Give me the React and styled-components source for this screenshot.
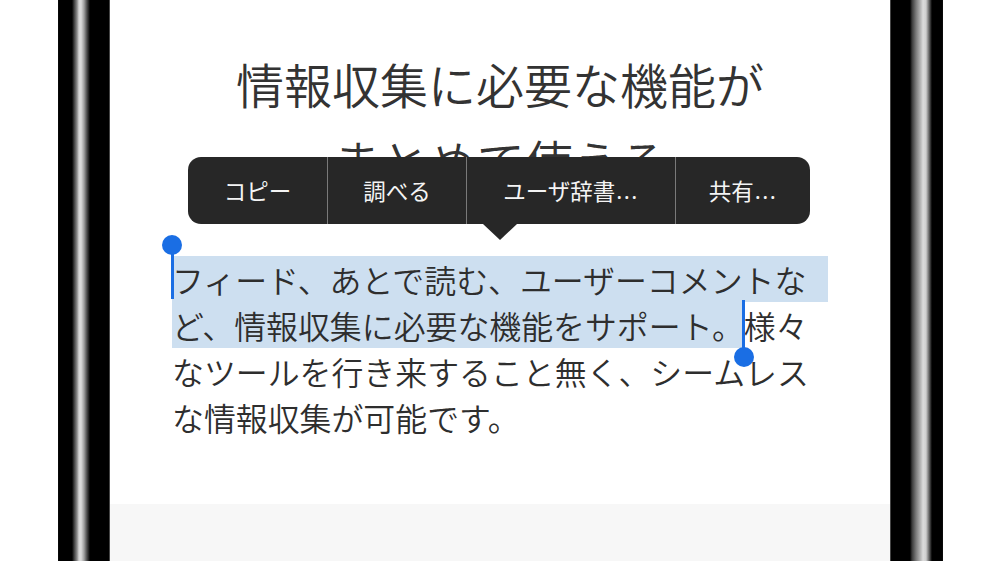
import React from "react";
import styled, { createGlobalStyle } from "styled-components";

const Global = createGlobalStyle`
  html, body { margin: 0; padding: 0; background: #fff; }
  body { font-family: "Noto Sans CJK JP", "Noto Sans", sans-serif; }
`;

const Page = styled.div`
  width: 1000px;
  height: 561px;
  display: flex;
  overflow: hidden;
  background: #fff;
`;

const Gutter = styled.div`
  width: ${(p) => p.$w}px;
  flex: ${(p) => (p.$grow ? 1 : "none")};
`;

const Bezel = styled.div`
  width: ${(p) => (p.$side === "left" ? 52 : 53)}px;
  flex: none;
  background: ${(p) =>
    p.$side === "left"
      ? "linear-gradient(to right, #111 0, #000 1px, #000 14px, #3a3a3a 16px, #8a8a8a 19px, #d4d4d4 21px, #dcdcdc 23px, #a0a0a0 26px, #4a4a4a 29px, #000 32px, #000 51px, #8a8a8a 52px)"
      : "linear-gradient(to right, #8a8a8a 0, #000 1px, #000 20px, #3a3a3a 22px, #7a7a7a 26px, #bdbdbd 31px, #dcdcdc 33px, #cfcfcf 36px, #6a6a6a 39px, #000 42px, #000 52px, #111 53px)"};
`;

const Screen = styled.div`
  position: relative;
  width: 780px;
  flex: none;
  display: flex;
  flex-direction: column;
  background: #fff;
`;

const Title = styled.h1`
  margin: 0;
  padding-top: 45px;
  font-family: "Noto Sans CJK JP", sans-serif;
  font-weight: 350;
  font-size: 48px;
  line-height: 77px;
  color: #333;
  text-align: center;
`;

const Body = styled.div`
  margin: 57px 0 0 62px;
  width: 656px;
  font-family: "Noto Sans CJK JP", sans-serif;
  font-weight: 350;
  font-size: 31.9px;
  line-height: 46px;
  color: #2e2e2e;
  white-space: nowrap;
`;

const Line = styled.div`
  height: 46px;
  ${(p) => (p.$selected ? "background: #cddff0;" : "")}
`;

const Sel = styled.span`
  background: #cddff0;
  display: inline-block;
  height: 46px;
  vertical-align: top;
`;

const Caret = styled.span`
  position: relative;
  display: inline-block;
  width: 0;
  height: 46px;
  vertical-align: top;
`;

const CaretBar = styled.span`
  position: absolute;
  left: -1.5px;
  width: 3px;
  top: ${(p) => p.$top}px;
  height: ${(p) => p.$h}px;
  background: #1a6ee4;
`;

const Knob = styled.span`
  position: absolute;
  left: -10px;
  top: ${(p) => p.$top}px;
  width: 20px;
  height: 20px;
  border-radius: 50%;
  background: #1a6ee4;
`;

const Spacer = styled.div`
  flex: 1;
`;

const BottomBand = styled.div`
  height: 57px;
  background: #f7f7f7;
`;

const Menu = styled.div`
  position: absolute;
  left: 78px;
  top: 157px;
  height: 67px;
  display: flex;
  background: #272727;
  border-radius: 13px;
  font-family: "Noto Sans", "Noto Sans CJK JP", sans-serif;
  font-size: 22.5px;
  color: #f4f4f4;
`;

const MenuItem = styled.div`
  width: ${(p) => p.$w}px;
  display: flex;
  align-items: center;
  justify-content: center;
  box-sizing: border-box;
  border-left: ${(p) => (p.$first ? "none" : "1px solid #7a7a7a")};
  white-space: nowrap;
`;

const Dots = styled.span`
  letter-spacing: 1.5px;
  margin-left: 1px;
`;

const Arrow = styled.div`
  position: absolute;
  top: 100%;
  left: 295px;
  width: 0;
  height: 0;
  border-left: 17px solid transparent;
  border-right: 17px solid transparent;
  border-top: 16px solid #272727;
`;

const items = [
  { label: "コピー", w: 139 },
  { label: "調べる", w: 139 },
  { label: "ユーザ辞書", dots: true, w: 209 },
  { label: "共有", dots: true, w: 135 },
];

export default function App() {
  return (
    <>
      <Global />
      <Page>
        <Gutter $w={58} />
        <Bezel $side="left" />
        <Screen>
          <Title>
            情報収集に必要な機能が
            <br />
            まとめて使える
          </Title>
          <Body>
            <Line $selected>
              <Caret>
                <CaretBar $top={-5} $h={48} />
                <Knob $top={-21} />
              </Caret>
              フィード、あとで読む、ユーザーコメントな
            </Line>
            <Line>
              <Sel>ど、情報収集に必要な機能をサポート。</Sel>
              <Caret>
                <CaretBar $top={-2} $h={50} />
                <Knob $top={45} />
              </Caret>
              様々
            </Line>
            <Line>なツールを行き来すること無く、シームレス</Line>
            <Line>な情報収集が可能です。</Line>
          </Body>
          <Spacer />
          <BottomBand />
          <Menu>
            {items.map((it, i) => (
              <MenuItem key={it.label} $w={it.w} $first={i === 0}>
                {it.label}
                {it.dots && <Dots>...</Dots>}
              </MenuItem>
            ))}
            <Arrow />
          </Menu>
        </Screen>
        <Bezel $side="right" />
        <Gutter $grow />
      </Page>
    </>
  );
}
